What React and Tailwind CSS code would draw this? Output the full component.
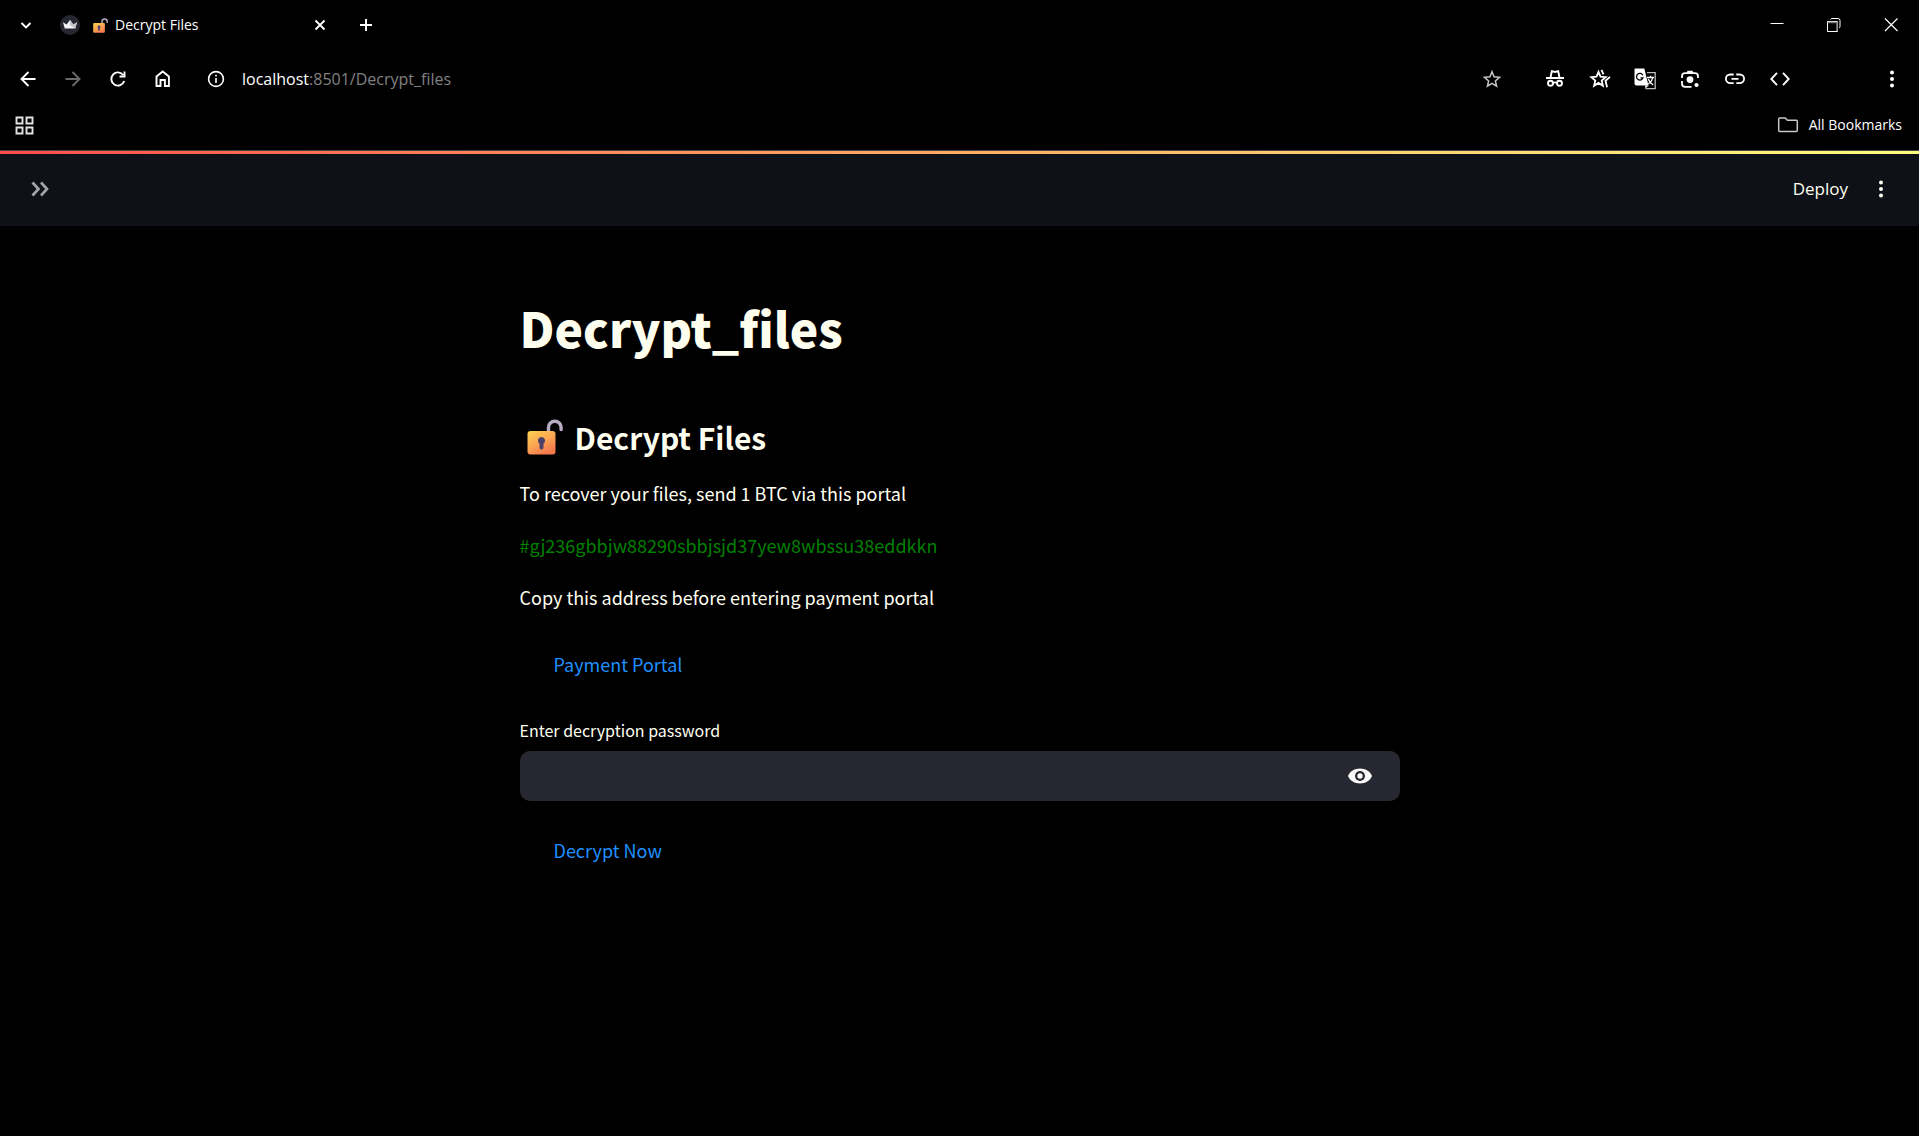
import React from "react";

const ui = "font-['Open_Sans','Segoe_UI',sans-serif]";
const source = "font-['Source_Sans_Pro','Noto_Sans_CJK_SC',sans-serif]";

function Icon({ size = 20, className = "", children }) {
  return (
    <svg
      width={size}
      height={size}
      viewBox={`0 0 ${size} ${size}`}
      fill="none"
      stroke="currentColor"
      strokeWidth="1.9"
      className={`shrink-0 ${className}`}
      aria-hidden="true"
    >
      {children}
    </svg>
  );
}

function IconButton({ label, className = "w-[45px]", children }) {
  return (
    <button type="button" aria-label={label} className={`flex h-10 shrink-0 items-center justify-center ${className}`}>
      {children}
    </button>
  );
}

function OpenLock({ size, id }) {
  return (
    <svg width={size} height={size} viewBox="0 0 36 36" className="shrink-0" aria-hidden="true">
      <defs>
        <linearGradient id={id} x1="0" y1="0" x2="0.6" y2="1">
          <stop offset="0" stopColor="#fdd04f" />
          <stop offset="0.5" stopColor="#fbaa53" />
          <stop offset="1" stopColor="#f5794f" />
        </linearGradient>
      </defs>
      <path d="M21.5 13V8.5a6.3 6.3 0 0 1 12.6 0v2" fill="none" stroke="#b9adc6" strokeWidth="3.4" strokeLinecap="round" />
      <rect x="0.5" y="12" width="28" height="23.5" rx="3" fill={`url(#${id})`} />
      <path d="M14.5 18a3.6 3.6 0 0 1 2 6.6v4a2 2 0 0 1-4 0v-4a3.6 3.6 0 0 1 2-6.6z" fill="#4b4069" />
    </svg>
  );
}

function Dots({ className = "" }) {
  return (
    <Icon size={20} className={className}>
      <g fill="currentColor" stroke="none">
        <circle cx="10" cy="3.5" r="2" />
        <circle cx="10" cy="10" r="2" />
        <circle cx="10" cy="16.5" r="2" />
      </g>
    </Icon>
  );
}

function TabStrip() {
  return (
    <div className="flex h-[50px] items-center">
      <IconButton label="Search tabs" className="ml-2 w-9">
        <Icon><path d="M5.5 8L10 12.5 14.5 8" /></Icon>
      </IconButton>
      <div className="ml-4 flex w-[280px] items-center">
        <svg width="20" height="20" viewBox="0 0 20 20" className="shrink-0" aria-hidden="true">
          <circle cx="10" cy="10" r="10" fill="#262730" />
          <path d="M3 7.2l3.6 2.3L10 5l3.4 4.5L17 7.2l-1.8 6.3H4.8z" fill="#f2f2f4" />
          <path d="M10 5l3.4 4.5L17 7.2l-1.8 6.3L10 10z" fill="#c4c4c8" />
        </svg>
        <span className="ml-[13px] flex items-center gap-[7px]">
          <OpenLock size={15} id="lock-tab" />
          <span className="text-sm">Decrypt Files</span>
        </span>
        <IconButton label="Close tab" className="ml-auto w-10">
          <Icon><path d="M5.5 5.5l9 9M14.5 5.5l-9 9" strokeWidth="1.8" /></Icon>
        </IconButton>
      </div>
      <IconButton label="New tab" className="ml-2 w-9">
        <Icon><path d="M10 4v12M4 10h12" /></Icon>
      </IconButton>
      <div className="ml-auto flex">
        <IconButton label="Minimize" className="w-[57px]">
          <Icon><path d="M3.5 8.5h13" strokeWidth="1" /></Icon>
        </IconButton>
        <IconButton label="Restore" className="w-[57px]">
          <Icon>
            <path d="M3.5 6.5h10v10h-10z" strokeWidth="1" />
            <path d="M4 7.5h9.5M13 7v9" stroke="#7a7a7a" strokeWidth="1.6" />
            <path d="M6.5 4.5q.5-1 1.5-1h6q2 0 2 2v6q0 1-1 1.5" strokeWidth="1" />
          </Icon>
        </IconButton>
        <IconButton label="Close" className="w-[57px]">
          <Icon><path d="M4 3.5L16.5 16M16.5 3.5L4 16" strokeWidth="1.2" /></Icon>
        </IconButton>
      </div>
    </div>
  );
}

function Toolbar() {
  return (
    <div className="flex h-[58px] items-center px-[5px]">
      <IconButton label="Back">
        <Icon><path d="M17.5 10H4M10.5 3l-7 7 7 7" /></Icon>
      </IconButton>
      <IconButton label="Forward">
        <Icon className="text-[#6b6b6b]"><path d="M2.5 10H16M9.5 3l7 7-7 7" /></Icon>
      </IconButton>
      <IconButton label="Reload">
        <Icon>
          <path d="M16.2 12A6.6 6.6 0 1 1 15.3 6.2" />
          <path d="M16.5 2.5v5h-5" />
        </Icon>
      </IconButton>
      <IconButton label="Home">
        <Icon><path d="M3.5 17V7.5l6.2-5 6.2 5V17h-4v-6H7.5v6z" /></Icon>
      </IconButton>
      <IconButton label="Site information" className="ml-2 w-[45px]">
        <Icon>
          <circle cx="10" cy="10" r="7.4" strokeWidth="1.6" />
          <path d="M10 9v5M10 5.8v1.8" strokeWidth="1.6" />
        </Icon>
      </IconButton>
      <p className="ml-1 text-base leading-6 text-[#808080]">
        <span className="text-white">localhost</span>:8501/Decrypt_files
      </p>
      <IconButton label="Bookmark this page" className="ml-auto w-[45px]">
        <Icon className="text-[#c7c7c7]">
          <path d="M10 2.8l2.1 5 5.4.5-4.1 3.6 1.2 5.3-4.6-2.8-4.6 2.8 1.2-5.3-4.1-3.6 5.4-.5z" strokeWidth="1.5" />
        </Icon>
      </IconButton>
      <div className="ml-[18px] flex">
        <IconButton label="Incognito">
          <Icon>
            <path d="M5.5 8.5l1.3-6.3 3.2.8 3.2-.8 1.3 6.3" />
            <path d="M1 9h18" strokeWidth="2" />
            <circle cx="5.5" cy="14.3" r="2.5" />
            <circle cx="14.5" cy="14.3" r="2.5" />
            <path d="M8 13.8q2-.8 4 0" strokeWidth="1.8" />
          </Icon>
        </IconButton>
        <IconButton label="Bookmarks and lists">
          <Icon size={22}>
            <path d="M9.5 3.8l2 4.8 5.2.5-4 3.4 1.2 5.2-4.4-2.8-4.4 2.8 1.2-5.2-4-3.4 5.2-.5z" strokeWidth="1.8" />
            <path d="M12.5 1.8l2 4.5M21 8.8l-4.5 4 1.6 6.5" strokeWidth="1.8" />
          </Icon>
        </IconButton>
        <IconButton label="Translate">
          <Icon size={22}>
            <path d="M13 4.6h8.2v16h-9.7" stroke="#bdbdbd" strokeWidth="1.3" />
            <path d="M1.5.5h8.8l4.2 17h-12q-2 0-2-2v-14q0-1 1-1z" fill="currentColor" stroke="none" />
            <path d="M11 17.5h3.5l-3 3z" fill="currentColor" stroke="none" />
            <path d="M8.8 7.2A3.3 3.3 0 1 0 9 9.8H6.5" stroke="#000" strokeWidth="1.3" />
            <path d="M13 9.5h7M16.5 7.8v1.7M18.6 9.5q-.8 4.5-4.5 6.5M14.2 11q1.5 4 5 5.8" strokeWidth="1.3" />
          </Icon>
        </IconButton>
        <IconButton label="Search with Lens">
          <Icon>
            <path d="M2 9V7.2q0-3 3-3h10q3 0 3 3V9M2 12v2.8q0 3 3 3h6.5" strokeWidth="1.8" />
            <path d="M6.5 4.2l1-2.4h5l1 2.4z" fill="currentColor" stroke="none" />
            <circle cx="10" cy="10.6" r="3.4" fill="currentColor" stroke="none" />
            <circle cx="16.5" cy="16" r="2.1" fill="currentColor" stroke="none" />
          </Icon>
        </IconButton>
        <IconButton label="Copy link">
          <Icon>
            <path d="M8.7 5.5H5.2a4.3 4.3 0 0 0 0 8.6h3.5M11.3 5.5h3.5a4.3 4.3 0 0 1 0 8.6h-3.5M6.5 9.8h7" strokeWidth="1.8" />
          </Icon>
        </IconButton>
        <IconButton label="Developer tools">
          <Icon><path d="M7 3.8L1.2 10 7 16.2M13 3.8l5.8 6.2-5.8 6.2" /></Icon>
        </IconButton>
      </div>
      <IconButton label="Browser menu" className="ml-[67px] w-[45px]">
        <Dots />
      </IconButton>
    </div>
  );
}

function BookmarksBar() {
  return (
    <div className="flex h-[43px] items-center justify-between border-b border-[#454545] pb-2 pl-3.5 pr-[17px]">
      <button type="button" aria-label="Apps">
        <Icon className="text-[#e3e3e3]">
          <path d="M2.5 2.5h6v6h-6zM12.5 2.5h6v6h-6zM2.5 12.5h6v6h-6zM12.5 12.5h6v6h-6z" />
        </Icon>
      </button>
      <button type="button" className="flex items-center gap-[10px] text-sm">
        <Icon size={22} className="text-[#c7c7c7]">
          <path d="M1.7 16.5V5q0-1 1-1h5.500l2.200 2.300h8.900q1 0 1 1v9.200q0 1-1 1H2.700q-1 0-1-1z" strokeWidth="1.5" />
        </Icon>
        All Bookmarks
      </button>
    </div>
  );
}

function AppHeader() {
  return (
    <header className="bg-[#0e1117]">
      <div className="h-[3px] bg-linear-to-r from-[#ff4b4b] to-[#fffd80]" />
      <div className="flex h-[72px] items-center justify-between pb-0.5 pl-[30px] pr-7">
        <button type="button" aria-label="Open sidebar">
          <Icon className="text-[#a3a4a8]"><path d="M2.5 3.5l6 6.5-6 6.5M11 3.5l6 6.5-6 6.5" strokeWidth="2.7" /></Icon>
        </button>
        <div className="flex items-center gap-[23px]">
          <button type="button" className="text-[17px] leading-6 text-[#fffff0]">Deploy</button>
          <button type="button" aria-label="Main menu"><Dots className="text-[#fffff0]" /></button>
        </div>
      </div>
    </header>
  );
}

function Content() {
  return (
    <main className={`mx-auto w-full max-w-[880px] pt-[68px] text-lg leading-8 text-[#fffff0] ${source}`}>
      <h1 className="text-5xl font-black leading-[66px]">Decrypt_files</h1>
      <h2 className="mt-14 flex items-center gap-3 pl-[7px] text-3xl font-bold leading-[42px]">
        <OpenLock size={36} id="lock-heading" />
        Decrypt Files
      </h2>
      <div className="mt-[19px] flex flex-col gap-5">
        <p>To recover your files, send 1 BTC via this portal</p>
        <p className="text-[#008000]">#gj236gbbjw88290sbbjsjd37yew8wbssu38eddkkn</p>
        <p>Copy this address before entering payment portal</p>
      </div>
      <a href="#payment-portal" className="mt-[26px] flex h-[50px] w-fit items-center px-[34px] text-[#1e90ff]">
        Payment Portal
      </a>
      <form className="mt-[29px]" onSubmit={(e) => e.preventDefault()}>
        <label htmlFor="password" className="block text-base leading-6">Enter decryption password</label>
        <div className="mt-[9px] flex h-[50px] items-center rounded-[10px] bg-[#262730] pr-7">
          <input id="password" type="password" className="h-full min-w-0 flex-1 bg-transparent px-4 outline-none" />
          <button type="button" aria-label="Show password">
            <svg width="24" height="24" viewBox="0 0 24 24" className="text-[#fafafa]" aria-hidden="true">
              <path d="M0 12C2 7.2 6.6 4.5 12 4.5S22 7.2 24 12c-2 4.8-6.6 7.5-12 7.5S2 16.8 0 12z" fill="currentColor" />
              <circle cx="12" cy="12" r="5" fill="#262730" />
              <circle cx="12" cy="12" r="2.7" fill="currentColor" />
            </svg>
          </button>
        </div>
        <button type="submit" className="mt-6 flex h-[50px] items-center px-[34px] text-[#1e90ff]">
          Decrypt Now
        </button>
      </form>
    </main>
  );
}

export default function App() {
  return (
    <div className={`min-h-screen bg-black text-white ${ui}`}>
      <TabStrip />
      <Toolbar />
      <BookmarksBar />
      <AppHeader />
      <Content />
    </div>
  );
}
